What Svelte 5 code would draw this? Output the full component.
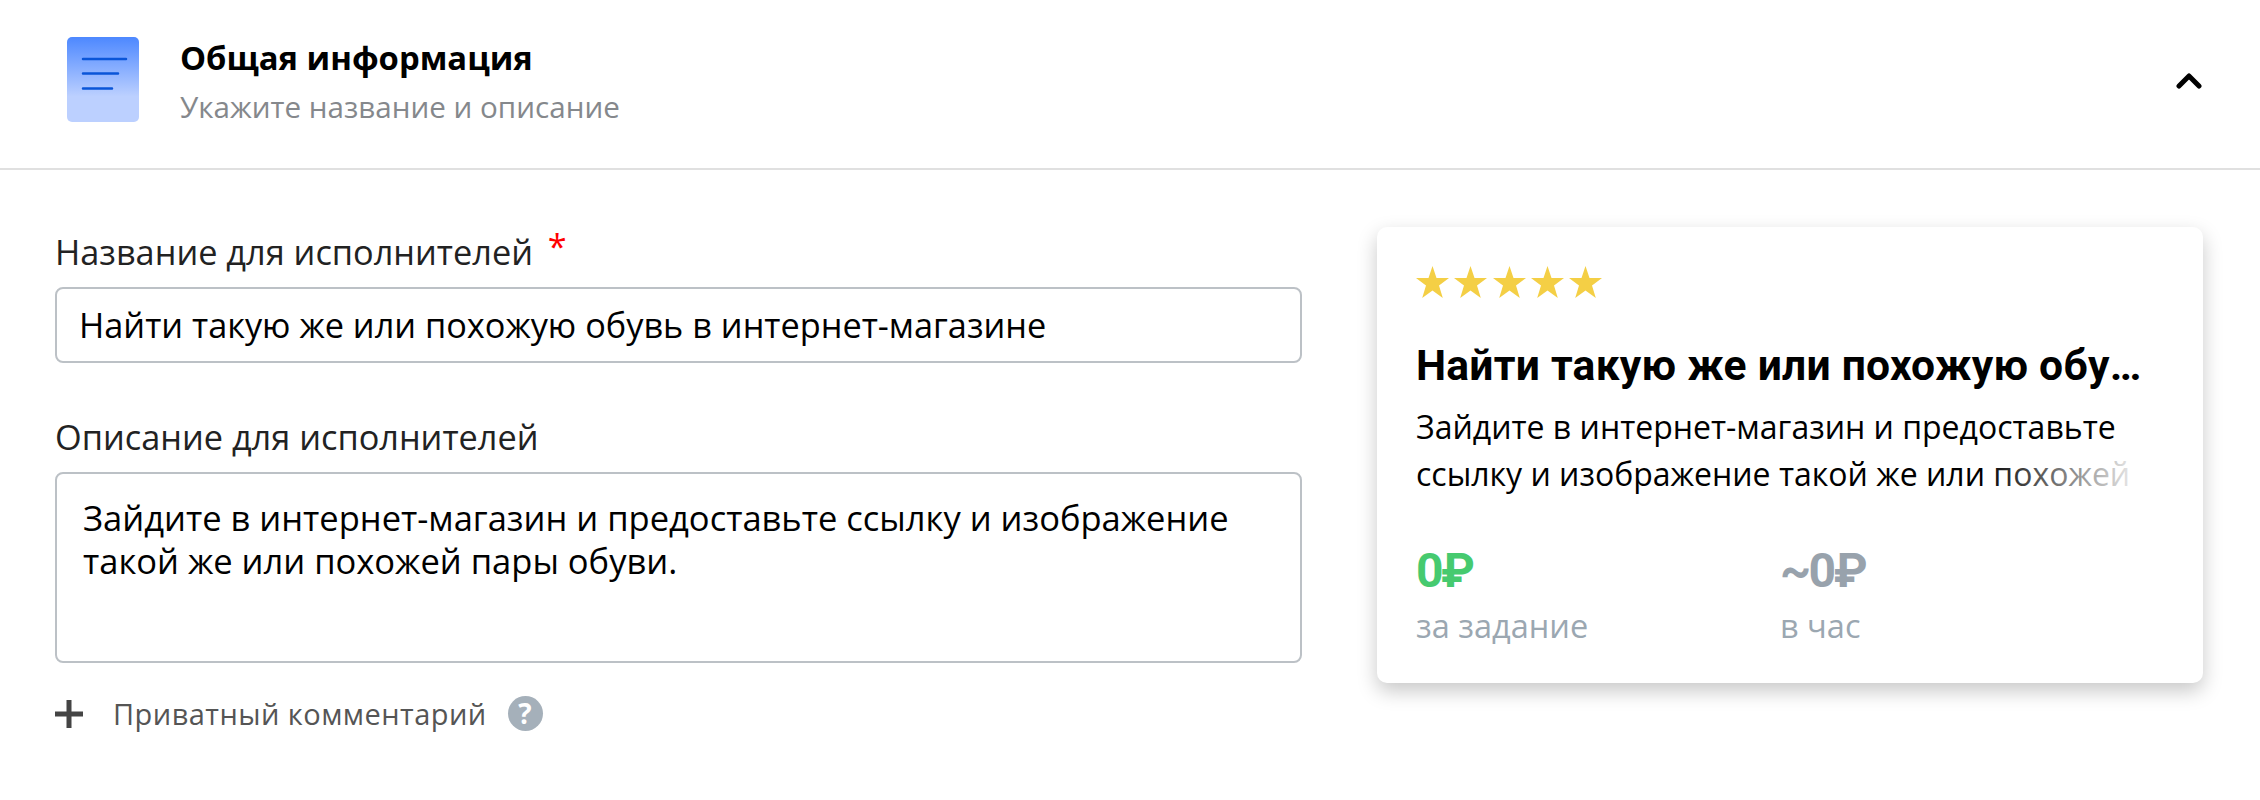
<script>
  let title = 'Найти такую же или похожую обувь в интернет-магазине';
  let description = 'Зайдите в интернет-магазин и предоставьте ссылку и изображение такой же или похожей пары обуви.';
</script>

<div class="page">
  <header class="head">
    <svg class="doc" width="72" height="85" viewBox="0 0 72 85">
      <defs>
        <linearGradient id="docFill" x1="0" y1="0" x2="0" y2="1">
          <stop offset="0" stop-color="#4d88ff" />
          <stop offset="0.7" stop-color="#bcd0ff" />
        </linearGradient>
      </defs>
      <rect width="72" height="85" rx="5" fill="url(#docFill)" />
      <path d="M16 22h43M16 36.500h35M16 51.500h29" stroke="#0a55d8" stroke-width="2.500" stroke-linecap="round" />
    </svg>
    <div class="head-text">
      <div class="head-title">Общая информация</div>
      <div class="head-sub">Укажите название и описание</div>
    </div>
    <svg class="chevron" width="26" height="17" viewBox="0 0 26 17">
      <path d="M3 14L13 4L23 14" fill="none" stroke="#000" stroke-width="5" stroke-linecap="round" stroke-linejoin="round" />
    </svg>
  </header>

  <div class="body">
    <div class="form">
      <div class="label">Название для исполнителей <span class="req">*</span></div>
      <div class="input">{title}</div>
      <div class="label second">Описание для исполнителей</div>
      <div class="textarea">{description}</div>
      <div class="private">
        <svg width="28" height="28" viewBox="0 0 28 28">
          <path d="M14 0v28M0 14h28" stroke="#444" stroke-width="5" />
        </svg>
        <span>Приватный комментарий</span>
        <span class="help">?</span>
      </div>
    </div>

    <div class="card">
      <div class="stars">
        {#each [1, 2, 3, 4, 5] as s (s)}
          <svg width="33" height="32" viewBox="0 0 33 32"><path d="M16.500 0l4 12h12.500l-10 7.600 3.800 12.400-10.300-7.600-10.300 7.600 3.800-12.400-10-7.600h12.500z" fill="#f4cf45" /></svg>
        {/each}
      </div>
      <div class="card-title">{title}</div>
      <div class="card-text">{description}</div>
      <div class="prices">
        <div class="price">
          <div class="amount green">0₽</div>
          <div class="unit">за задание</div>
        </div>
        <div class="price">
          <div class="amount gray">~0₽</div>
          <div class="unit">в час</div>
        </div>
      </div>
    </div>
  </div>
</div>

<style>
  :global(body) {
    margin: 0;
    background: #fff;
  }

  .page {
    width: 2260px;
    height: 800px;
    overflow: hidden;
    font-family: "Open Sans", sans-serif;
    color: #000;
  }

  .head {
    display: flex;
    align-items: flex-start;
    box-sizing: border-box;
    height: 170px;
    padding: 37px 58px 0 67px;
    border-bottom: 2px solid #e0e0e0;
  }

  .doc {
    flex-shrink: 0;
  }

  .head-text {
    flex: 1;
    margin-left: 41px;
    margin-top: -1px;
  }

  .head-title {
    font-size: 32.800px;
    font-weight: 700;
    line-height: 44px;
  }

  .head-sub {
    font-size: 29.600px;
    line-height: 40px;
    margin-top: 7px;
    color: #85888c;
  }

  .chevron {
    margin-top: 35px;
  }

  .body {
    display: flex;
    padding: 57px 57px 0 55px;
    gap: 75px;
  }

  .form {
    width: 1247px;
    padding-top: 3px;
  }

  .label {
    font-size: 34.300px;
    line-height: 44px;
    color: #222;
    margin-bottom: 13px;
  }

  .label.second {
    margin-top: 52px;
  }

  .req {
    color: #f00;
    margin-left: 6px;
    line-height: 0;
    vertical-align: 6px;
  }

  .input,
  .textarea {
    box-sizing: border-box;
    border: 2px solid #bcc1c6;
    border-radius: 8px;
    font-size: 34.300px;
  }

  .input {
    height: 76px;
    line-height: 72px;
    padding: 0 22px;
  }

  .textarea {
    height: 191px;
    padding: 22px 26px;
    font-size: 34.500px;
    line-height: 43px;
  }

  .private {
    display: flex;
    align-items: center;
    gap: 30px;
    margin-top: 31px;
    font-size: 29px;
    letter-spacing: 0.45px;
    color: #555;
  }

  .help {
    width: 35px;
    height: 35px;
    border-radius: 50%;
    margin-left: -9px;
    background: #a5b0ba;
    color: #fff;
    font-weight: 700;
    font-size: 28px;
    text-align: center;
    line-height: 35px;
  }

  .card {
    box-sizing: border-box;
    width: 826px;
    height: 456px;
    padding: 39px 56px 0 39px;
    border-radius: 10px;
    box-shadow: 0 8px 20px rgba(0, 0, 0, 0.22);
  }

  .stars {
    display: flex;
    gap: 5.300px;
  }

  .card-title {
    margin-top: 41px;
    font-family: Roboto, sans-serif;
    font-size: 42.600px;
    letter-spacing: 0.25px;
    line-height: 52px;
    font-weight: 700;
    white-space: nowrap;
    overflow: hidden;
    text-overflow: ellipsis;
  }

  .card-text {
    position: relative;
    margin-top: 12px;
    height: 94px;
    overflow: hidden;
    font-size: 32px;
    line-height: 47px;
  }

  .card-text::after {
    content: '';
    position: absolute;
    right: 0;
    bottom: 0;
    width: 165px;
    height: 47px;
    background: linear-gradient(to right, rgba(255, 255, 255, 0), #fff);
  }

  .prices {
    display: flex;
    margin-top: 44px;
  }

  .price {
    width: 364px;
  }

  .amount {
    font-family: Roboto, sans-serif;
    font-size: 48px;
    font-weight: 700;
    letter-spacing: -2.500px;
    line-height: 60px;
  }

  .green {
    color: #46ca6f;
  }

  .gray {
    color: #98a2ac;
  }

  .unit {
    margin-top: 2px;
    font-size: 32.500px;
    color: #9ba7b1;
  }
</style>
